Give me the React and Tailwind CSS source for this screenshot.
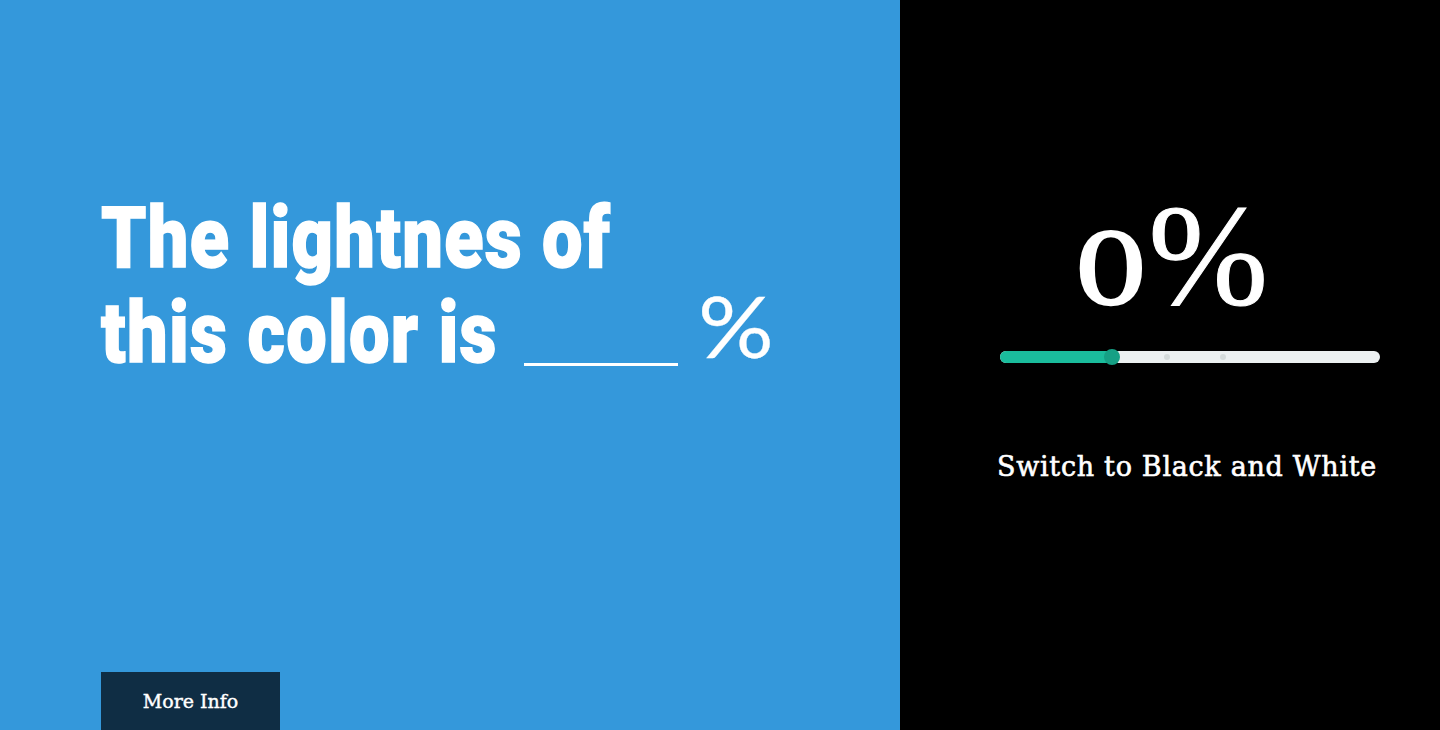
import React from 'react';

const display = "font-['Roboto',sans-serif] font-black tracking-[1.5px] [-webkit-text-stroke:1.5px_white]";
const serif = "font-['DejaVu_Serif',serif]";

function Slider() {
  return (
    <div className="relative h-3 w-[380px] rounded-md bg-[#ecf0f1]">
      <div className="h-3 w-[112px] rounded-l-md bg-[#1abc9c]" />
      <span className="absolute left-[104px] top-[-2px] h-4 w-4 rounded-full bg-[#16a085]" />
      <span className="absolute left-[164px] top-[3px] h-1.5 w-1.5 rounded-full bg-[#d5dbdb]" />
      <span className="absolute left-[220px] top-[3px] h-1.5 w-1.5 rounded-full bg-[#d5dbdb]" />
    </div>
  );
}

export default function App() {
  return (
    <div className="flex h-[730px] w-[1440px] overflow-hidden text-white">
      <div className="flex w-[900px] flex-col bg-[#3498db] pl-[101px]">
        <div className="flex-1 pt-[190px]">
          <h1 className={`${display} origin-left scale-x-[0.838] text-[86px] leading-[95px] whitespace-nowrap`}>
            The lightnes of
          </h1>
          <div className="flex h-[95px] items-start">
            <span className={`${display} w-[423px] origin-left scale-x-[0.838] text-[86px] leading-[95px] whitespace-nowrap`}>
              this color is
            </span>
            <span className="mt-[78px] h-[3px] w-[154px] bg-white" />
            <span className="ml-[20px] mt-[-8px] inline-block origin-left scale-x-[1.1] font-['Lato',sans-serif] text-[86px] font-normal leading-[95px] [-webkit-text-stroke:0.3px_white]">%</span>
          </div>
        </div>
        <button className={`${serif} h-[58px] w-[179px] bg-[#0f2d44] text-[19px] text-white [-webkit-text-stroke:0.4px_white]`}>More Info</button>
      </div>
      <div className="flex flex-1 flex-col bg-black pl-[100px] pt-[181px]">
        <div className="ml-[86px] flex h-[150px] items-baseline font-['Liberation_Serif',serif]">
          <span className={`${serif} inline-block origin-right scale-x-[1.2] text-[98px] leading-[150px] [-webkit-text-stroke:2.5px_white]`}>0</span>
          <span className="text-[144px] leading-[150px] [-webkit-text-stroke:1px_white]">%</span>
        </div>
        <div className="mt-[20px]">
          <Slider />
        </div>
        <p className={`${serif} ml-[-3px] mt-[88px] text-[27px] leading-[32px] tracking-[0.7px] whitespace-nowrap [-webkit-text-stroke:0.6px_white]`}>Switch to Black and White</p>
      </div>
    </div>
  );
}
